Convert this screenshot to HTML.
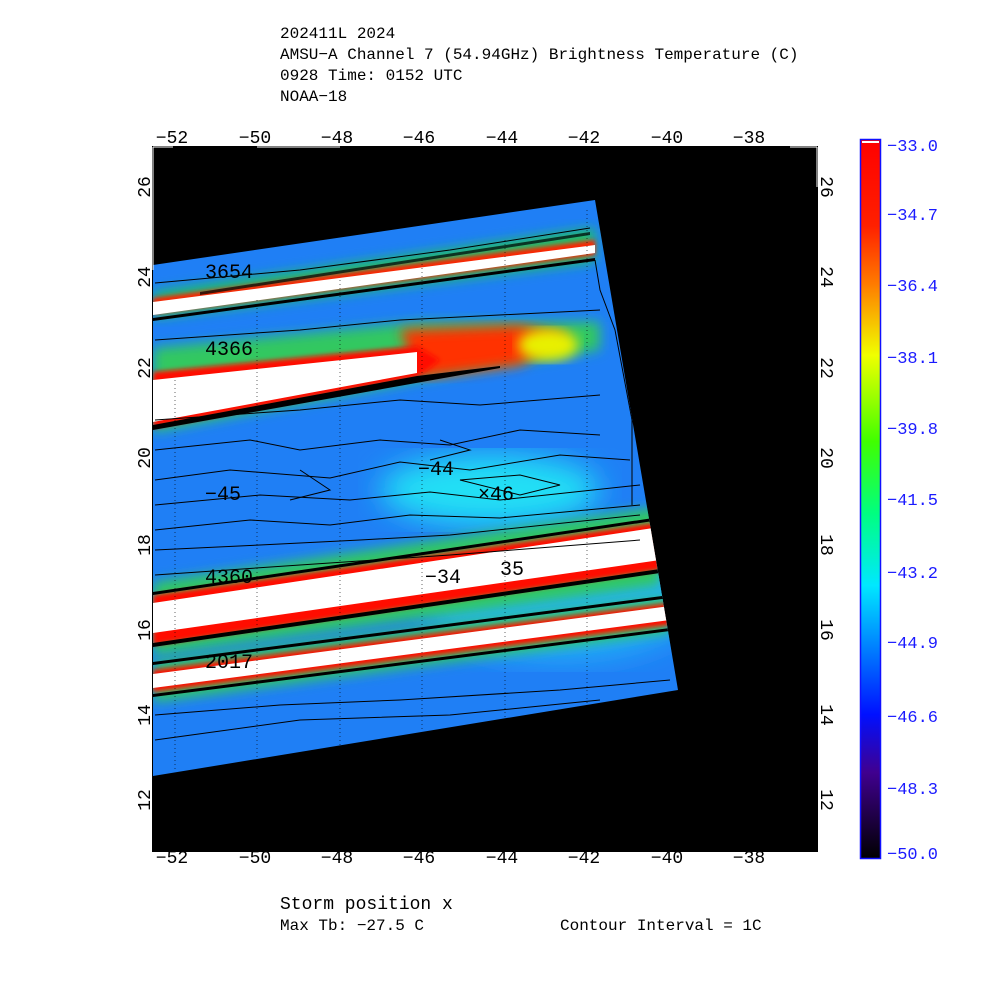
<!DOCTYPE html>
<html><head><meta charset="utf-8"><style>
html,body{margin:0;padding:0;background:#fff;width:1000px;height:1000px;overflow:hidden}
svg{display:block}
text{font-family:"Liberation Mono","DejaVu Sans Mono",monospace}
</style></head><body>
<svg width="1000" height="1000" viewBox="0 0 1000 1000" xmlns="http://www.w3.org/2000/svg">
<defs>
<linearGradient id="cb" x1="0" y1="0" x2="0" y2="1">
<stop offset="0" stop-color="#ff0000"/>
<stop offset="0.12" stop-color="#ff2000"/>
<stop offset="0.2" stop-color="#ff7a00"/>
<stop offset="0.3" stop-color="#f0ff00"/>
<stop offset="0.42" stop-color="#40ff00"/>
<stop offset="0.52" stop-color="#00ff80"/>
<stop offset="0.62" stop-color="#00e8ff"/>
<stop offset="0.72" stop-color="#0070ff"/>
<stop offset="0.8" stop-color="#0010ff"/>
<stop offset="0.88" stop-color="#400090"/>
<stop offset="1" stop-color="#000000"/>
</linearGradient>
<clipPath id="sw"><polygon points="153,265 595,200 678,690 153,776"/></clipPath>
<filter id="b6"><feGaussianBlur stdDeviation="6"/></filter>
<filter id="b15"><feGaussianBlur stdDeviation="15"/></filter>
<filter id="b3"><feGaussianBlur stdDeviation="2.5"/></filter>
</defs>

<g font-size="16" fill="#000">
<text x="280" y="38">202411L 2024</text>
<text x="280" y="59">AMSU−A Channel 7 (54.94GHz) Brightness Temperature (C)</text>
<text x="280" y="80">0928 Time: 0152 UTC</text>
<text x="280" y="101">NOAA−18</text>
</g>

<rect x="152" y="146" width="666" height="706" fill="#000"/>
<g clip-path="url(#sw)">
<rect x="150" y="195" width="540" height="590" fill="#1f7ff5"/>
<ellipse cx="490" cy="490" rx="110" ry="35" fill="#20e0f5" filter="url(#b15)"/>
<ellipse cx="560" cy="600" rx="140" ry="60" fill="#22b0f8" filter="url(#b15)"/>
<!-- band 1 -->
<polygon points="153,292 595,228 595,262 153,318" fill="#20c060" filter="url(#b6)"/>
<polygon points="153,298 595,240 595,255 153,314" fill="#ff2000" filter="url(#b3)"/>
<polygon points="153,302 595,245 595,253 153,315" fill="#fff"/>
<polygon points="153,318 595,258 595,261 153,321" fill="#000"/>
<polygon points="200,292 590,232 590,235 200,295" fill="#000" opacity="0.7"/>
<!-- band 2 -->
<polygon points="153,348 420,322 600,322 600,350 420,380 153,432" fill="#30c860" filter="url(#b6)"/>
<polygon points="400,330 520,325 570,335 520,365 420,378" fill="#ff3000" filter="url(#b6)"/>
<ellipse cx="548" cy="345" rx="30" ry="16" fill="#e8f000" filter="url(#b6)"/>
<polygon points="153,372 417,346 440,360 417,378 153,428" fill="#ff1000" filter="url(#b3)"/>
<polygon points="153,380 417,352 417,373 153,422" fill="#fff"/>
<polygon points="153,425 417,376 500,366 500,368 153,430" fill="#000"/>
<!-- band 3 -->
<polygon points="153,582 660,507 660,585 153,655" fill="#30c860" filter="url(#b6)"/>
<polygon points="153,595 660,522 660,570 153,645" fill="#ff1000" filter="url(#b3)"/>
<polygon points="153,603 660,527 660,560 153,633" fill="#fff"/>
<polygon points="153,592 660,517 660,520 153,595" fill="#000"/>
<polygon points="153,643 660,569 660,573 153,647" fill="#000"/>
<!-- band 4 -->
<polygon points="153,662 670,597 670,632 153,702" fill="#30c860" filter="url(#b6)"/>
<polygon points="153,670 670,603 670,625 153,692" fill="#ff1000" filter="url(#b3)"/>
<polygon points="153,674 670,606 670,620 153,688" fill="#fff"/>
<polygon points="153,662 670,595 670,598 153,665" fill="#000"/>
<polygon points="153,694 670,628 670,631 153,697" fill="#000"/>
<g fill="none" stroke="#000" stroke-width="1">
<path d="M155,450 L250,440 L300,450 L380,440 L450,445 L520,430 L600,435"/>
<path d="M155,480 L230,470 L330,478 L400,462 L470,470 L560,455 L630,460"/>
<path d="M155,505 L260,495 L350,500 L430,492 L500,500 L640,485"/>
<path d="M155,530 L250,520 L330,525 L410,515 L500,518 L640,505"/>
<path d="M155,550 L260,545 L360,540 L450,535 L640,515"/>
<path d="M155,420 L300,410 L400,400 L480,405 L600,395"/>
<path d="M155,340 L300,330 L400,320 L600,310"/>
<path d="M155,283 L300,270 L450,250 L590,228"/>
<path d="M300,470 L330,490 L290,500"/>
<path d="M440,440 L470,450 L430,460"/>
<path d="M460,480 L520,475 L560,485 L520,495 Z"/>
<path d="M155,740 L300,720 L450,715 L600,700"/>
<path d="M155,715 L280,705 L400,700 L560,690 L670,680"/>
<path d="M155,575 L300,565 L450,555 L640,540"/>
<path d="M595,260 L600,290 L615,330 L632,420 L632,505"/>
</g>
</g>
<g stroke="#000" stroke-width="1" stroke-dasharray="1 3" opacity="0.6">
<line x1="175" y1="380" x2="175" y2="770"/>
<line x1="257" y1="300" x2="257" y2="770"/>
<line x1="340" y1="280" x2="340" y2="760"/>
<line x1="422" y1="260" x2="422" y2="750"/>
<line x1="505" y1="240" x2="505" y2="730"/>
<line x1="587" y1="210" x2="587" y2="720"/>
</g>
<g font-size="20" fill="#000">
<text x="205" y="500">−45</text>
<text x="418" y="475">−44</text>
<text x="478" y="500">×46</text>
<text x="425" y="583">−34</text>
<text x="500" y="575">35</text>
<text x="205" y="583">4360</text>
<text x="205" y="355">4366</text>
<text x="205" y="278">3654</text>
<text x="205" y="668">2017</text>
</g>
<g stroke="#fff" stroke-width="1">
<line x1="153" y1="147" x2="153" y2="270"/>
<line x1="153" y1="147" x2="173" y2="147"/>
<line x1="257" y1="147" x2="340" y2="147"/>
<line x1="817" y1="147" x2="817" y2="187"/>
<line x1="790" y1="147" x2="817" y2="147"/>
</g>

<g font-size="18" fill="#000" text-anchor="middle">
<text x="172" y="143">−52</text><text x="255" y="143">−50</text><text x="337" y="143">−48</text><text x="419" y="143">−46</text><text x="502" y="143">−44</text><text x="584" y="143">−42</text><text x="667" y="143">−40</text><text x="749" y="143">−38</text>
<text x="172" y="863">−52</text><text x="255" y="863">−50</text><text x="337" y="863">−48</text><text x="419" y="863">−46</text><text x="502" y="863">−44</text><text x="584" y="863">−42</text><text x="667" y="863">−40</text><text x="749" y="863">−38</text>
</g>
<g font-size="18" fill="#000" text-anchor="middle">
<text transform="translate(150,187) rotate(-90)">26</text>
<text transform="translate(150,277) rotate(-90)">24</text>
<text transform="translate(150,368) rotate(-90)">22</text>
<text transform="translate(150,458) rotate(-90)">20</text>
<text transform="translate(150,545) rotate(-90)">18</text>
<text transform="translate(150,630) rotate(-90)">16</text>
<text transform="translate(150,715) rotate(-90)">14</text>
<text transform="translate(150,800) rotate(-90)">12</text>
<text transform="translate(821,187) rotate(90)">26</text>
<text transform="translate(821,277) rotate(90)">24</text>
<text transform="translate(821,368) rotate(90)">22</text>
<text transform="translate(821,458) rotate(90)">20</text>
<text transform="translate(821,545) rotate(90)">18</text>
<text transform="translate(821,630) rotate(90)">16</text>
<text transform="translate(821,715) rotate(90)">14</text>
<text transform="translate(821,800) rotate(90)">12</text>
</g>

<rect x="860.5" y="139.5" width="20" height="719" fill="url(#cb)" stroke="#1010ff" stroke-width="1.5"/>
<rect x="862" y="141" width="17" height="2" fill="#fff"/>
<g font-size="17" fill="#1a1aff">
<text x="887" y="151">−33.0</text>
<text x="887" y="220">−34.7</text>
<text x="887" y="291">−36.4</text>
<text x="887" y="363">−38.1</text>
<text x="887" y="434">−39.8</text>
<text x="887" y="505">−41.5</text>
<text x="887" y="578">−43.2</text>
<text x="887" y="648">−44.9</text>
<text x="887" y="722">−46.6</text>
<text x="887" y="794">−48.3</text>
<text x="887" y="859">−50.0</text>
</g>

<text x="280" y="909" font-size="18" fill="#000">Storm position x</text>
<text x="280" y="930" font-size="16" fill="#000">Max Tb: −27.5    C</text>
<text x="560" y="930" font-size="16" fill="#000">Contour Interval = 1C</text>
</svg>
</body></html>
